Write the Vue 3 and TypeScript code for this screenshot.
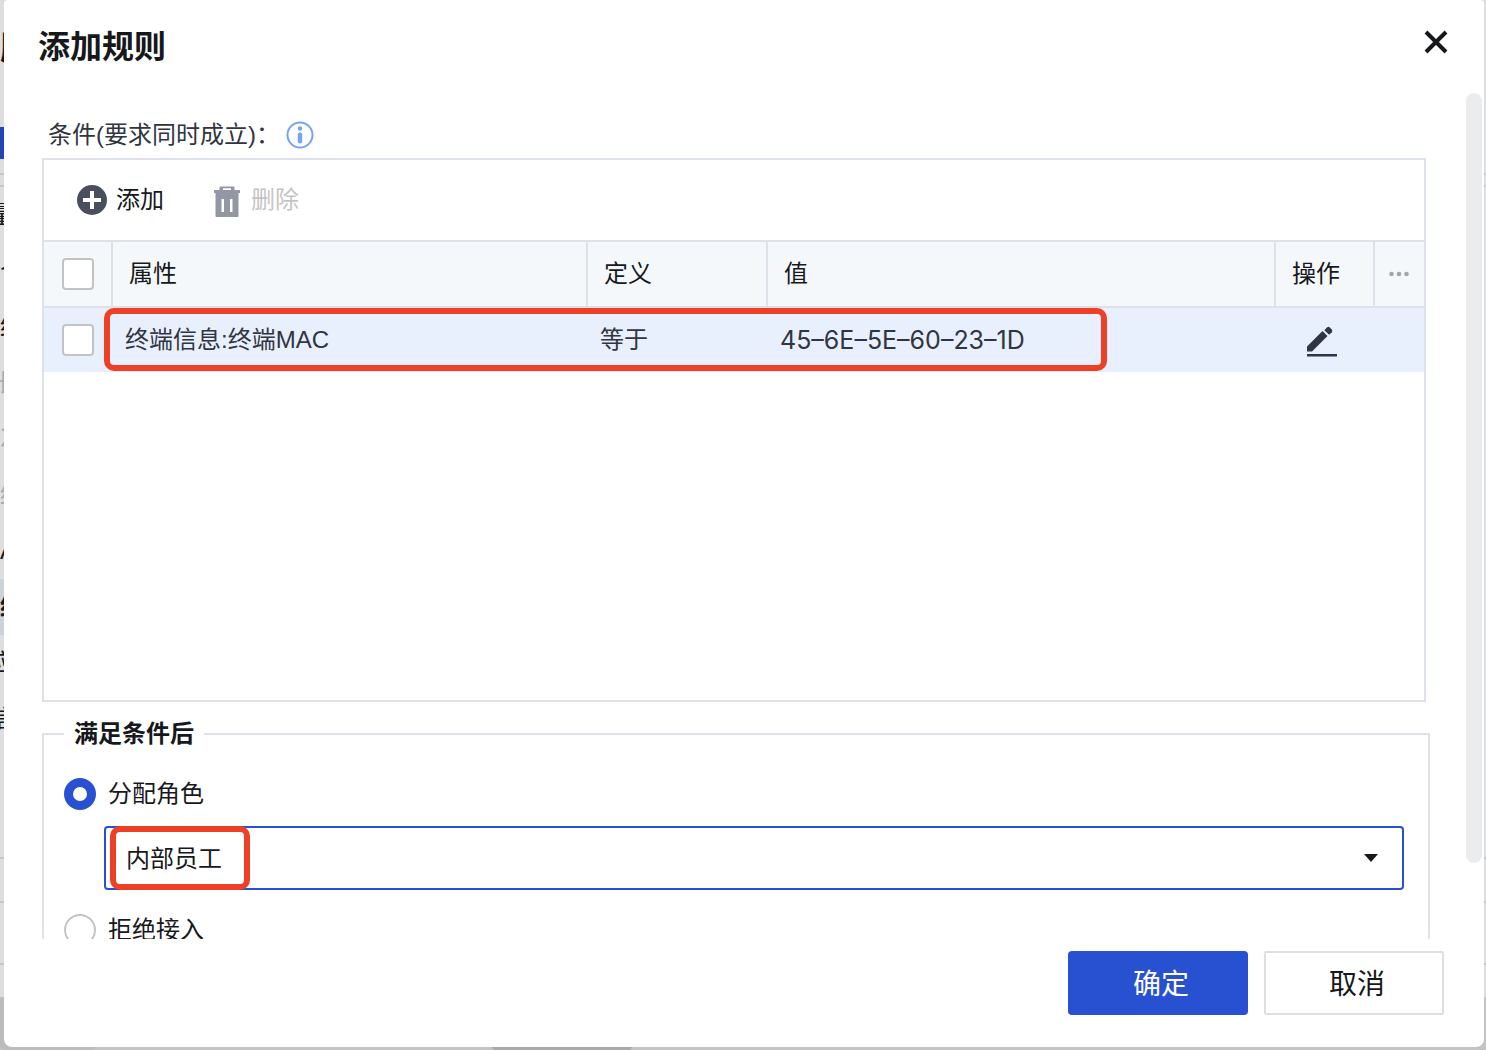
<script setup lang="ts">
import { ref } from 'vue'

interface Condition {
  id: number
  attribute: string
  operator: string
  value: string
}

interface MenuEntry {
  label: string
  state: 'normal' | 'muted' | 'active'
  centered?: boolean
}

const conditions = ref<Condition[]>([
  { id: 1, attribute: '终端信息:终端MAC', operator: '等于', value: '45–6E–5E–60–23–1D' },
])
const action = ref<'assign' | 'reject'>('assign')
const role = ref('内部员工')

const menu: MenuEntry[] = [
  { label: '量', state: 'normal', centered: true },
  { label: '个', state: 'normal' },
  { label: '终', state: 'normal' },
  { label: '账', state: 'muted', centered: true },
  { label: '次', state: 'muted' },
  { label: '终', state: 'muted' },
  { label: 'A', state: 'normal' },
  { label: '终', state: 'active' },
  { label: '应', state: 'normal', centered: true },
  { label: '信', state: 'normal', centered: true },
]
</script>

<template>
  <div class="page">
    <div class="backdrop" aria-hidden="true">
      <div class="back-title slice">服</div>
      <div class="back-tab"></div>
      <div class="back-rule"></div>
      <div class="back-menu">
        <div v-for="(entry, i) in menu" :key="i" class="slice" :class="[entry.state, { centered: entry.centered }]">{{ entry.label }}</div>
      </div>
      <div class="back-panel"></div>
      <div class="back-panel tall"></div>
      <div class="back-panel short"></div>
      <div class="back-foot"><span class="foot-tab"></span><span class="foot-tab dark"></span></div>
    </div>

    <section class="dialog" role="dialog" aria-labelledby="dialog-title">
      <header class="dialog-head">
        <h1 id="dialog-title">添加规则</h1>
        <button class="close" type="button" aria-label="关闭">
          <svg width="24" height="24" viewBox="0 0 24 24"><path d="M2 2L22 22M22 2L2 22" stroke="#16181c" stroke-width="4" /></svg>
        </button>
      </header>

      <div class="dialog-body">
        <div class="content">
          <div class="caption">
            <span>条件(要求同时成立)：</span>
            <svg width="28" height="28" viewBox="0 0 28 28">
              <circle cx="14" cy="14" r="12.5" fill="none" stroke="#76a3f5" stroke-width="2" />
              <circle cx="14" cy="7.5" r="2.2" fill="#76a3f5" />
              <rect x="11.8" y="11.5" width="4.4" height="11" rx="2" fill="#76a3f5" />
            </svg>
          </div>

          <div class="panel">
            <div class="toolbar">
              <button type="button" class="tool">
                <svg width="30" height="30" viewBox="0 0 30 30">
                  <circle cx="15" cy="15" r="15" fill="#4a4f60" />
                  <path d="M15 6V24M6 15H24" stroke="#fff" stroke-width="4" />
                </svg>
                添加
              </button>
              <button type="button" class="tool" disabled>
                <svg width="30" height="34" viewBox="0 0 30 34">
                  <path fill="#9298a3" fill-rule="evenodd" d="M7.500 7V4.500Q7.500 3.500 8.500 3.500H21.500Q22.500 3.500 22.500 4.500V7H28V10H26.500V33Q26.500 34 25.500 34H4.500Q3.500 34 3.500 33V10H2V7H7.500ZM11 5.300V7H19V5.300ZM9.500 16V29H12V16ZM18 16V29H20.500V16Z" />
                </svg>
                删除
              </button>
            </div>

            <table>
              <colgroup>
                <col class="c-check" /><col class="c-attr" /><col class="c-op" /><col /><col class="c-act" /><col class="c-more" />
              </colgroup>
              <thead>
                <tr>
                  <th class="check"><input type="checkbox" aria-label="全选" /></th>
                  <th>属性</th>
                  <th>定义</th>
                  <th>值</th>
                  <th>操作</th>
                  <th class="more">
                    <button type="button" aria-label="更多列">
                      <svg width="20" height="6" viewBox="0 0 20 6" fill="#a4a6aa">
                        <circle cx="2.500" cy="3" r="2.300" /><circle cx="10" cy="3" r="2.300" /><circle cx="17.500" cy="3" r="2.300" />
                      </svg>
                    </button>
                  </th>
                </tr>
              </thead>
              <tbody>
                <tr v-for="c in conditions" :key="c.id">
                  <td class="check"><input type="checkbox" aria-label="选择条件" /></td>
                  <td class="marked">{{ c.attribute }}<span class="mark mark-row"></span></td>
                  <td>{{ c.operator }}</td>
                  <td class="mac">{{ c.value }}</td>
                  <td class="edit">
                    <button type="button" aria-label="编辑">
                      <svg width="32" height="36" viewBox="0 0 32 36" fill="#303541">
                        <path d="M1 24.500L16.500 9L21.500 14L6 29.500H1Z" />
                        <path d="M18.300 8.200L21 5.500Q22.300 4.300 23.600 5.300L25.800 7.500Q26.800 8.900 25.800 10.200L23.200 12.800Z" />
                        <rect x="1" y="32" width="30" height="2.500" />
                      </svg>
                    </button>
                  </td>
                  <td></td>
                </tr>
              </tbody>
            </table>
          </div>

          <fieldset>
            <legend>满足条件后</legend>
            <label class="option"><input v-model="action" type="radio" name="action" value="assign" />分配角色</label>
            <div class="select-box">
              <select v-model="role" aria-label="角色">
                <option>内部员工</option>
              </select>
              <svg class="caret" width="14" height="8" viewBox="0 0 14 8"><path d="M0 0H14L7 8Z" fill="#16181c" /></svg>
              <span class="mark mark-role"></span>
            </div>
            <label class="option"><input v-model="action" type="radio" name="action" value="reject" />拒绝接入</label>
          </fieldset>
        </div>
        <div class="scrollbar"><div class="thumb"></div></div>
      </div>

      <footer class="dialog-foot">
        <button type="button" class="btn primary">确定</button>
        <button type="button" class="btn">取消</button>
      </footer>
    </section>
  </div>
</template>

<style>
body {
  margin: 0;
}
</style>

<style scoped>
.page,
.page * {
  box-sizing: border-box;
}
.page {
  position: relative;
  height: 100vh;
  padding: 0 2px 3px 4px;
  overflow: hidden;
  font-family: "Liberation Sans", "Noto Sans CJK SC", sans-serif;
  font-size: 24px;
  line-height: 32px;
  color: #16181c;
}
button {
  margin: 0;
  padding: 0;
  border: 0;
  background: none;
  font: inherit;
  color: inherit;
  cursor: pointer;
}
svg {
  display: block;
  flex: none;
}

/* Page behind the dialog */
.backdrop {
  position: absolute;
  inset: 0;
  display: flex;
  flex-direction: column;
  background: #dedede;
}
.backdrop > * {
  flex: none;
}
.slice {
  display: flex;
  align-items: center;
  width: 4px;
  overflow: hidden;
  white-space: nowrap;
}
.slice.centered {
  justify-content: center;
}
.back-title {
  height: 127px;
  padding-bottom: 32px;
  font-size: 32px;
  font-weight: 700;
}
.back-tab {
  width: 4px;
  height: 32px;
  background: #2145b2;
}
.back-rule {
  height: 14px;
  margin-top: 14px;
  border: solid #c4c7cf;
  border-width: 2px 0;
}
.back-menu {
  height: 670px;
}
.back-menu .slice {
  height: 56px;
}
.muted {
  color: #a9a9a9;
}
.active {
  background: #ccd2da;
  font-weight: 700;
}
.back-panel {
  height: 44px;
  border-top: 2px solid #c4c7cf;
}
.back-panel.tall {
  height: 62px;
}
.back-panel.short {
  height: 34px;
}
.backdrop .back-foot {
  display: flex;
  flex: 1;
  align-items: flex-end;
  gap: 396px;
  background: #c4c4c4;
}
.foot-tab {
  width: 96px;
  height: 53px;
  border-radius: 4px;
  background: #bcbcbc;
}
.foot-tab.dark {
  width: 140px;
  background: #a9a9a9;
}

/* Dialog */
.dialog {
  position: relative;
  display: flex;
  flex-direction: column;
  height: 100%;
  border-radius: 4px 4px 8px 8px;
  background: #fff;
}
.dialog-head {
  display: flex;
  flex: none;
  align-items: flex-start;
  justify-content: space-between;
  height: 93px;
  padding: 22px 36px 0 34px;
}
h1 {
  margin: 0;
  font-size: 32px;
  line-height: 50px;
}
.close {
  padding-top: 8px;
}
.dialog-body {
  display: flex;
  flex: 1;
  min-height: 0;
  gap: 36px;
  padding: 0 2px 0 38px;
  overflow: hidden;
}
.content {
  flex: 1;
  min-width: 0;
}
.scrollbar {
  width: 16px;
}
.thumb {
  height: 91%;
  border-radius: 8px;
  background: #ebecee;
}
.caption {
  display: flex;
  align-items: center;
  gap: 6px;
  padding: 26px 6px 7px;
  color: #303541;
}

/* Condition list */
.panel {
  height: 544px;
  margin-right: 4px;
  border: 2px solid #dde1ec;
}
.toolbar {
  display: flex;
  align-items: center;
  gap: 48px;
  height: 80px;
  padding-left: 33px;
}
.tool {
  display: flex;
  align-items: center;
  gap: 9px;
}
.tool:disabled {
  color: #c4c4c4;
}
table {
  width: 100%;
  table-layout: fixed;
  border-collapse: separate;
  border-spacing: 0;
}
.c-check {
  width: 69px;
}
.c-attr {
  width: 475px;
}
.c-op {
  width: 180px;
}
.c-act {
  width: 99px;
}
.c-more {
  width: 49px;
}
th {
  height: 68px;
  padding: 0 0 0 16px;
  border: solid #dde1ea;
  border-width: 2px 2px 2px 0;
  background: #f4f8fb;
  font-weight: 400;
  text-align: left;
}
th.more {
  padding-left: 14px;
  border-right: 0;
}
th button,
td button {
  display: block;
}
td {
  height: 64px;
  padding: 0 0 0 12px;
  background: #e9f0fd;
  color: #303541;
}
.check {
  padding-left: 18px;
}
.edit {
  padding-left: 30px;
}
.mac {
  font-family: Inter, sans-serif;
  font-size: 25px;
}
.marked {
  position: relative;
}
input {
  appearance: none;
  display: block;
  flex: none;
  width: 32px;
  height: 32px;
  margin: 0;
  border: 2px solid #c3c3c3;
  background: #fff;
}
input[type="checkbox"] {
  border-radius: 4px;
}
input[type="radio"] {
  border-radius: 50%;
}
input[type="radio"]:checked {
  border: 9px solid #2751d0;
}

/* Red highlight frames */
.mark {
  position: absolute;
  border: 6px solid #ee4026;
  border-radius: 10px;
  pointer-events: none;
}
.mark-row {
  top: 0;
  left: -9px;
  width: 1003px;
  height: 63px;
}
.mark-role {
  top: 0;
  left: 6px;
  width: 140px;
  height: 64px;
}

/* Result */
fieldset {
  min-width: 0;
  margin: 16px 0 0;
  padding: 28px 24px 24px 20px;
  border: 2px solid #dde1ec;
}
legend {
  padding: 0 10px;
  font-weight: 700;
}
.option {
  display: flex;
  align-items: center;
  gap: 12px;
}
.select-box {
  position: relative;
  margin: 16px 0 24px 40px;
}
select {
  appearance: none;
  display: block;
  width: 100%;
  height: 64px;
  padding: 2px 20px 0;
  border: 2px solid #2751d0;
  border-radius: 4px;
  background: #fff;
  font: inherit;
  color: inherit;
}
.caret {
  position: absolute;
  top: 28px;
  right: 26px;
}

/* Actions */
.dialog-foot {
  display: flex;
  flex: none;
  justify-content: flex-end;
  gap: 16px;
  height: 108px;
  padding: 12px 40px 0 0;
}
.btn {
  width: 180px;
  height: 64px;
  padding: 4px 0 0 6px;
  border: 2px solid #dfdfdf;
  border-radius: 2px;
  background: #fff;
  font-size: 28px;
}
.btn.primary {
  border: 0;
  border-radius: 4px;
  background: #2751d0;
  color: #fff;
}
</style>
